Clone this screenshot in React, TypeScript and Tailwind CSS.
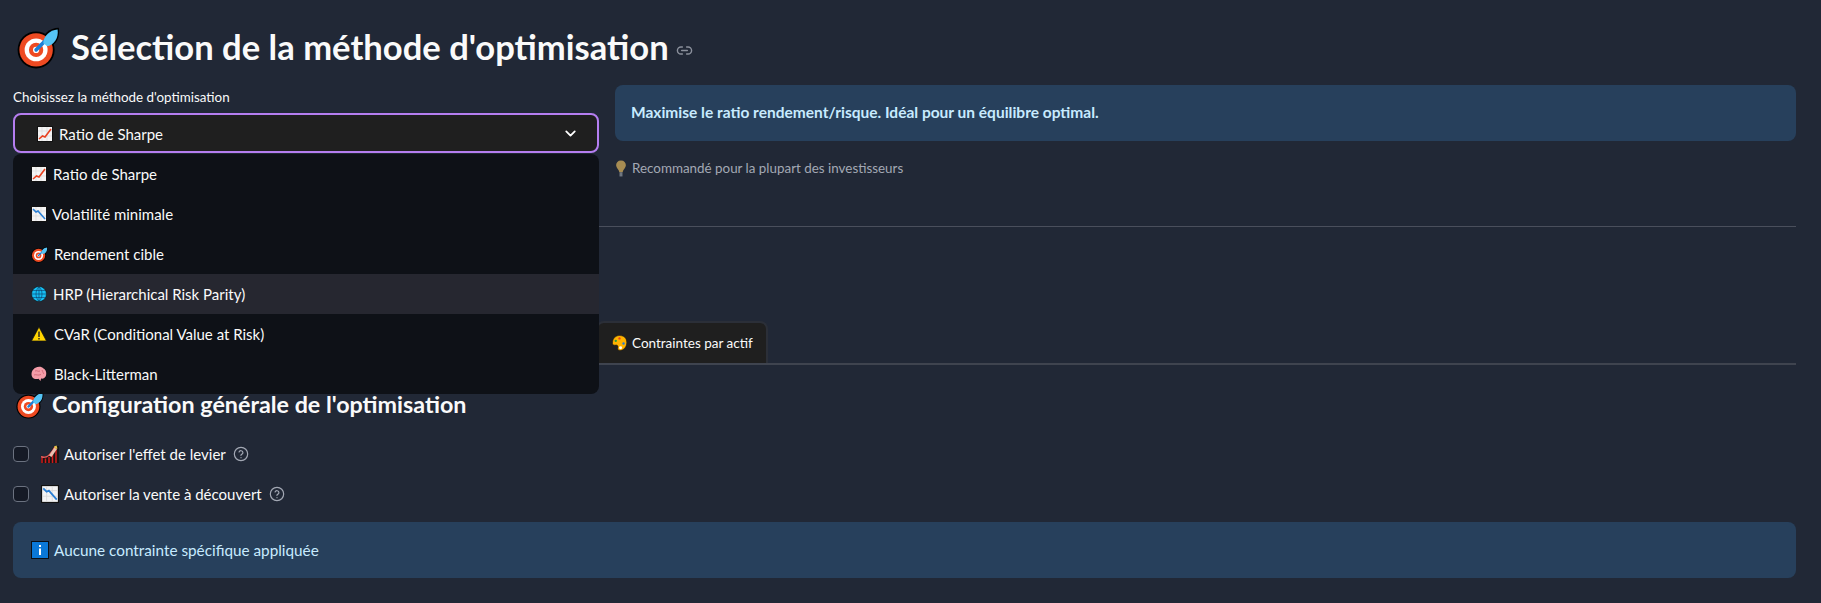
import { ChevronDown, Link2 } from "lucide-react";
import type { ReactNode } from "react";

const font = "font-['Lato','Noto_Sans',sans-serif]";

function Target({ size }: { size: number }) {
  return (
    <svg width={size} height={size} viewBox="0 0 36 36" className="shrink-0">
      <circle cx="16" cy="20" r="15.5" fill="#000" />
      <path d="M21 15C20 8 27 1.5 35 1.5C36.5 10 32 17 25 18Z" fill="#000" />
      <circle cx="16" cy="20" r="14" fill="#ee4a22" />
      <circle cx="16" cy="20" r="9.6" fill="#fff" />
      <circle cx="16" cy="20" r="6" fill="#ee4a22" />
      <circle cx="16" cy="20" r="2.6" fill="#fff" />
      <path d="M16 20 L27 9" stroke="#1b7fd6" strokeWidth="3" strokeLinecap="round" />
      <path d="M22 14.5C22 9 27.5 3.2 34 3C35 10 31 16 25.5 17Z" fill="#55c4f5" />
    </svg>
  );
}

function ChartUp({ size }: { size: number }) {
  return (
    <svg width={size} height={size} viewBox="0 0 16 16" className="shrink-0">
      <rect x="0.5" y="0.5" width="15" height="15" fill="#f4f4f4" stroke="#111" />
      <path d="M5 1V15M10 1V15M1 5H15M1 10H15" stroke="#d8d8d8" strokeWidth="0.7" />
      <path d="M2 13 L5.5 10 L8 11 L14 3" stroke="#e8411f" strokeWidth="1.6" fill="none" />
    </svg>
  );
}

function ChartDown({ size }: { size: number }) {
  return (
    <svg width={size} height={size} viewBox="0 0 16 16" className="shrink-0">
      <rect x="0.5" y="0.5" width="15" height="15" fill="#f4f4f4" stroke="#111" />
      <path d="M5 1V15M10 1V15M1 5H15M1 10H15" stroke="#d8d8d8" strokeWidth="0.7" />
      <path d="M2 3 L5 6 L7 5 L14 13" stroke="#2a7fd4" strokeWidth="1.6" fill="none" />
    </svg>
  );
}

function Globe() {
  return (
    <svg width="16" height="16" viewBox="0 0 16 16" className="shrink-0">
      <circle cx="8" cy="8" r="7.5" fill="#16bdf2" stroke="#111" strokeWidth="0.6" />
      <path d="M1 8H15M2 4.5H14M2 11.5H14M8 1V15M8 1C4 4 4 12 8 15M8 1C12 4 12 12 8 15" stroke="#0b3d66" strokeWidth="0.6" fill="none" />
    </svg>
  );
}

function Warning() {
  return (
    <svg width="16" height="16" viewBox="0 0 16 16" className="shrink-0">
      <path d="M8 1 L15.5 15 H0.5 Z" fill="#ffd400" stroke="#111" strokeWidth="0.7" />
      <rect x="7.3" y="5.5" width="1.4" height="5.5" fill="#222" />
      <rect x="7.3" y="12" width="1.4" height="1.5" fill="#222" />
    </svg>
  );
}

function Brain() {
  return (
    <svg width="16" height="16" viewBox="0 0 16 16" className="shrink-0">
      <path d="M5 1.5C7 0.5 11 0.5 12.5 2.5C15 3.5 15.8 7 15 9.5C14.5 12 12 13 10 12.5L9.5 15L7.5 12.8C5 13.5 2 13 1 10.5C0 8 0.5 3.5 5 1.5Z" fill="#f49ca8" />
      <path d="M4 5C6 4 7 6 9 5M3 9C5 8 7 10 10 8.5M11 4C12 6 12 7 13 8" stroke="#c9606f" strokeWidth="0.8" fill="none" />
    </svg>
  );
}

function Palette() {
  return (
    <svg width="15" height="16" viewBox="0 0 14 15" className="shrink-0">
      <path d="M7 0.5C11 0.5 13.8 3 13.8 7C13.8 11 11 14.5 7.5 14.5C5.5 14.5 5 13 5.5 11.5C6 10 4.5 9 3 9.5C1 10 0 8.5 0.5 6.5C1 3 3.5 0.5 7 0.5Z" fill="#ffb300" stroke="#111" strokeWidth="0.5" />
      <circle cx="3.5" cy="5.5" r="1.1" fill="#2e9e3a" />
      <circle cx="7" cy="3.2" r="1.1" fill="#e8411f" />
      <circle cx="10.8" cy="8" r="1.1" fill="#2a7fd4" />
      <circle cx="8" cy="12" r="1.4" fill="#fff" />
    </svg>
  );
}

function Bulb() {
  return (
    <svg width="12" height="17" viewBox="0 0 10 16" className="shrink-0">
      <path d="M5 0.5C8 0.5 9.6 2.5 9.6 5C9.6 7.5 7 9 6.5 11.5H3.5C3 9 0.4 7.5 0.4 5C0.4 2.5 2 0.5 5 0.5Z" fill="#a78c52" />
      <rect x="3.6" y="11.5" width="2.8" height="4" fill="#6f7680" />
    </svg>
  );
}

function Coaster() {
  return (
    <svg width="18" height="18" viewBox="0 0 18 18" className="shrink-0">
      <path d="M0 10C4 13 8 11 13 1H18V18H0Z" fill="#161616" />
      <path d="M1 12.5V18M4.5 13.5V18M8 12V18M11.5 8V18M15 4V18" stroke="#d11a1a" strokeWidth="1.5" />
      <path d="M0 11.5C5 14 9 11 14 2" stroke="#e05a5a" strokeWidth="1.6" fill="none" />
      <path d="M8 10.5L13.5 2.5L16 4L10.5 12Z" fill="#e8c0b0" />
      <path d="M13 1.5L15.5 0.5L16.5 3.5L14.5 4Z" fill="#e6c44a" />
    </svg>
  );
}

function InfoIcon() {
  return (
    <svg width="18" height="18" viewBox="0 0 18 18" className="shrink-0">
      <rect x="0.5" y="0.5" width="17" height="17" fill="#0a78d8" stroke="#0a0f16" />
      <rect x="8" y="4" width="2" height="2" fill="#fff" />
      <rect x="8" y="7.5" width="2" height="6.5" fill="#fff" />
    </svg>
  );
}

function Help() {
  return (
    <svg width="16" height="16" viewBox="0 0 24 24" fill="none" stroke="#a3a8b4" strokeWidth="1.8" strokeLinecap="round" className="shrink-0">
      <circle cx="12" cy="12" r="10" />
      <path d="M9.1 9a3 3 0 0 1 5.8 1c0 2-3 2.6-3 4" />
      <path d="M12 17.5h.01" />
    </svg>
  );
}

const options: { icon: ReactNode; label: string; active?: boolean; gap: string }[] = [
  { icon: <ChartUp size={16} />, label: "Ratio de Sharpe", gap: "gap-[6px]" },
  { icon: <ChartDown size={16} />, label: "Volatilité minimale", gap: "gap-[5px]" },
  { icon: <Target size={17} />, label: "Rendement cible", gap: "gap-[6px]" },
  { icon: <Globe />, label: "HRP (Hierarchical Risk Parity)", active: true, gap: "gap-[6px]" },
  { icon: <Warning />, label: "CVaR (Conditional Value at Risk)", gap: "gap-[7px]" },
  { icon: <Brain />, label: "Black-Litterman", gap: "gap-[7px]" },
];

function Checkbox({ icon, label }: { icon: ReactNode; label: string }) {
  return (
    <div className="flex h-[24px] items-center">
      <span className="h-4 w-4 rounded-[4px] border border-[#6b7280] bg-[#151a26]" />
      <span className="ml-[12px] flex items-center gap-[5px] text-[15px] text-[#fafafa]">
        {icon}
        {label}
      </span>
      <span className="ml-[7px]">
        <Help />
      </span>
    </div>
  );
}

export default function App() {
  return (
    <div className={`${font} h-[603px] overflow-hidden bg-[#212836] pl-[13px] pr-[25px] pt-[24px]`}>
      <div className="flex h-[46px] items-center">
        <span className="ml-[4px] mr-[11px]">
          <Target size={43} />
        </span>
        <h2 className="text-[34.6px] font-bold leading-none text-[#fafafa]">Sélection de la méthode d'optimisation</h2>
        <Link2 className="ml-[7px] mt-[6px] text-[#8b909c]" size={17} />
      </div>

      <div className="mt-[15px] grid grid-cols-[586px_1fr] gap-x-[16px]">
        <div className="relative">
          <label className="block h-[28px] pt-[2px] text-[13.4px] leading-[20px] text-[#fafafa]">Choisissez la méthode d'optimisation</label>
          <div className="flex h-[40px] items-center justify-between rounded-[8px] border-2 border-[#b57ef0] bg-[#1f1f1f] pl-[22px] pr-[18px]">
            <span className="flex items-center gap-[6px] pt-[2px] text-[15px] text-[#fafafa]">
              <ChartUp size={16} />
              Ratio de Sharpe
            </span>
            <ChevronDown size={17} strokeWidth={2.5} className="text-white" />
          </div>
          <ul className="absolute left-0 right-0 top-[69px] z-10 overflow-hidden rounded-[8px] bg-[#0e1117]">
            {options.map((o) => (
              <li
                key={o.label}
                className={`flex h-[40px] items-center pl-[18px] text-[15px] text-[#fafafa] ${o.gap} ${o.active ? "bg-[#262730]" : ""}`}
              >
                {o.icon}
                {o.label}
              </li>
            ))}
          </ul>
        </div>
        <div>
          <div className="flex h-[56px] items-center rounded-[8px] bg-[#27405c] px-[16px] text-[15.5px] font-bold text-[#c7ebff]">
            Maximise le ratio rendement/risque. Idéal pour un équilibre optimal.
          </div>
          <p className="mt-[17px] flex items-center gap-[5px] text-[13.4px] leading-[20px] text-[#a3a8b4]">
            <Bulb />
            Recommandé pour la plupart des investisseurs
          </p>
        </div>
      </div>

      <hr className="mt-[48px] border-0 border-t border-[#4a4f5c]" />

      <div className="mt-[94px] flex h-[44px] items-end border-b-2 border-[#3f444f]">
        <div className="ml-[583px] flex h-[42px] items-center gap-[5px] rounded-t-[8px] border-2 border-b-0 border-[#2b2f38] bg-[#1f1f1f] pl-[14px] pr-[13px] text-[13.5px] text-[#fafafa]">
          <Palette />
          Contraintes par actif
        </div>
      </div>

      <div className="mt-[23px] flex items-center gap-[8px] pl-[3px]">
        <span className="mt-[2px]">
          <Target size={28} />
        </span>
        <h3 className="text-[23.3px] font-bold leading-[32px] text-[#fafafa]">Configuration générale de l'optimisation</h3>
      </div>

      <div className="mt-[22px] flex flex-col gap-[16px]">
        <Checkbox icon={<Coaster />} label="Autoriser l'effet de levier" />
        <Checkbox icon={<ChartDown size={18} />} label="Autoriser la vente à découvert" />
      </div>

      <div className="mt-[16px] flex h-[56px] items-center gap-[5px] rounded-[8px] bg-[#27405c] px-[18px] text-[15.3px] text-[#c7ebff]">
        <InfoIcon />
        Aucune contrainte spécifique appliquée
      </div>
    </div>
  );
}
